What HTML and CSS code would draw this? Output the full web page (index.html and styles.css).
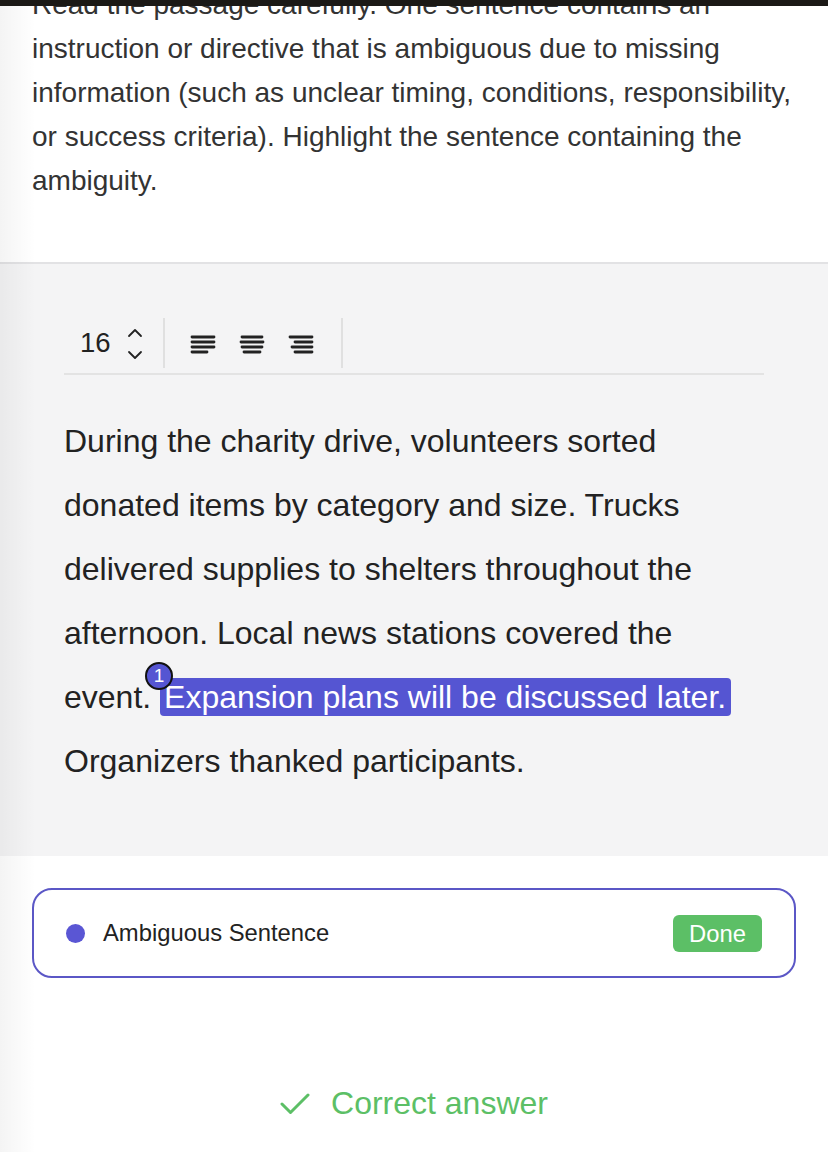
FILE: index.html
```html
<!DOCTYPE html>
<html>
<head>
<meta charset="utf-8">
<link rel="stylesheet" href="styles.css">
</head>
<body>
<div class="topbar"></div>
<div class="edge-shade"></div>
<section class="intro">
  <p class="intro-text">Read the passage carefully. One sentence contains an instruction or directive that is ambiguous due to missing information (such as unclear timing, conditions, responsibility, or success criteria). Highlight the sentence containing the ambiguity.</p>
</section>
<section class="reader">
  <div class="toolbar">
    <div class="size-ctrl">
      <span class="size-num">16</span>
      <span class="stepper">
        <svg width="16" height="34" viewBox="0 0 16 34"><path d="M2 9 L8 3 L14 9" fill="none" stroke="#222" stroke-width="1.8" stroke-linecap="round" stroke-linejoin="round"/><path d="M2 25 L8 31 L14 25" fill="none" stroke="#222" stroke-width="1.8" stroke-linecap="round" stroke-linejoin="round"/></svg>
      </span>
    </div>
    <div class="divider"></div>
    <div class="aligns">
      <svg class="align-icon" width="26" height="22" viewBox="0 0 26 22"><g stroke="#222" stroke-width="2.8" stroke-linecap="round"><line x1="2" y1="4" x2="24" y2="4"/><line x1="2" y1="9" x2="24" y2="9"/><line x1="2" y1="14" x2="24" y2="14"/><line x1="2" y1="19" x2="17" y2="19"/></g></svg>
      <svg class="align-icon" width="26" height="22" viewBox="0 0 26 22"><g stroke="#222" stroke-width="2.8" stroke-linecap="round"><line x1="3" y1="4" x2="23" y2="4"/><line x1="2" y1="9" x2="24" y2="9"/><line x1="3" y1="14" x2="23" y2="14"/><line x1="5" y1="19" x2="21" y2="19"/></g></svg>
      <svg class="align-icon" width="26" height="22" viewBox="0 0 26 22"><g stroke="#222" stroke-width="2.8" stroke-linecap="round"><line x1="2" y1="4" x2="24" y2="4"/><line x1="7" y1="9" x2="24" y2="9"/><line x1="4" y1="14" x2="24" y2="14"/><line x1="7" y1="19" x2="24" y2="19"/></g></svg>
    </div>
    <div class="divider"></div>
  </div>
  <p class="passage">During the charity drive, volunteers sorted donated items by category and size. Trucks delivered supplies to shelters throughout the afternoon. Local news stations covered the event. <span class="hl"><span class="badge">1</span>Expansion plans will be discussed later.</span> Organizers thanked participants.</p>
</section>
<section class="answers">
  <div class="card">
    <span class="dot"></span>
    <span class="card-label">Ambiguous Sentence</span>
    <span class="done">Done</span>
  </div>
  <div class="result">
    <svg width="30" height="24" viewBox="0 0 30 24"><path d="M2 12 L10.5 20.5 L28 3" fill="none" stroke="#5cbf66" stroke-width="3" stroke-linecap="round" stroke-linejoin="round"/></svg>
    <span class="result-text">Correct answer</span>
  </div>
</section>
</body>
</html>
```
FILE: styles.css
```css
html, body {
  margin: 0;
  padding: 0;
  background: #ffffff;
}
body {
  font-family: "Liberation Sans", Arial, sans-serif;
  color: #222;
  width: 828px;
  height: 1152px;
  overflow: hidden;
  position: relative;
}
.topbar {
  position: absolute;
  top: 0;
  left: 0;
  right: 0;
  height: 6px;
  background: #1b1916;
  z-index: 5;
}
.edge-shade {
  position: absolute;
  top: 0;
  left: 0;
  bottom: 0;
  width: 36px;
  background: linear-gradient(to right, rgba(0,0,0,0.045), rgba(0,0,0,0));
  z-index: 4;
  pointer-events: none;
}
.intro {
  height: 262px;
  border-bottom: 2px solid #e2e2e4;
  overflow: hidden;
  padding: 0 16px 0 32px;
}
.intro-text {
  margin: -17px 0 0 0;
  font-size: 28px;
  line-height: 44px;
  color: #333;
}
.reader {
  background: #f4f4f5;
  padding: 48px 64px 63px;
  height: 481px;
}
.toolbar {
  display: flex;
  align-items: center;
  height: 61px;
  border-bottom: 2px solid #e3e3e3;
  padding-left: 16px;
}
.size-ctrl {
  display: flex;
  align-items: center;
  gap: 16px;
  padding-right: 20px;
}
.size-num {
  font-size: 27.5px;
  color: #222;
}
.stepper {
  display: flex;
  margin-top: 2px;
}
.divider {
  width: 2px;
  height: 50px;
  background: #e0e0e0;
  align-self: flex-start;
  margin-top: 6px;
}
.aligns {
  display: flex;
  gap: 23px;
  padding: 0 27px 0 25px;
  margin-top: 2px;
}
.passage {
  margin: 34px 0 0 0;
  font-size: 32px;
  line-height: 64px;
  color: #222;
}
.hl {
  position: relative;
  background: #5555d2;
  color: #fff;
  border-radius: 4px;
  padding: 1px 5px 1px 4px;
}
.badge {
  position: absolute;
  left: -15px;
  top: -16px;
  width: 24px;
  height: 24px;
  border-radius: 50%;
  background: #5555d2;
  border: 2px solid #111;
  color: #fff;
  font-size: 19px;
  line-height: 24px;
  text-align: center;
}
.answers {
  padding: 32px 32px 0;
}
.card {
  display: flex;
  align-items: center;
  height: 86px;
  border: 2px solid #5b57c6;
  border-radius: 20px;
  padding: 0 32px 0 32px;
}
.dot {
  width: 19px;
  height: 19px;
  border-radius: 50%;
  background: #5a56d4;
  margin-right: 18px;
}
.card-label {
  font-size: 23.8px;
  color: #222;
  flex: 1;
}
.done {
  background: #5cbf66;
  color: #fff;
  font-size: 23.8px;
  border-radius: 6px;
  padding: 5px 16px 5px;
  line-height: 27px;
}
.result {
  display: flex;
  justify-content: center;
  align-items: center;
  gap: 21px;
  margin-top: 107px;
}
.result-text {
  font-size: 32px;
  color: #5cbf66;
}
```
